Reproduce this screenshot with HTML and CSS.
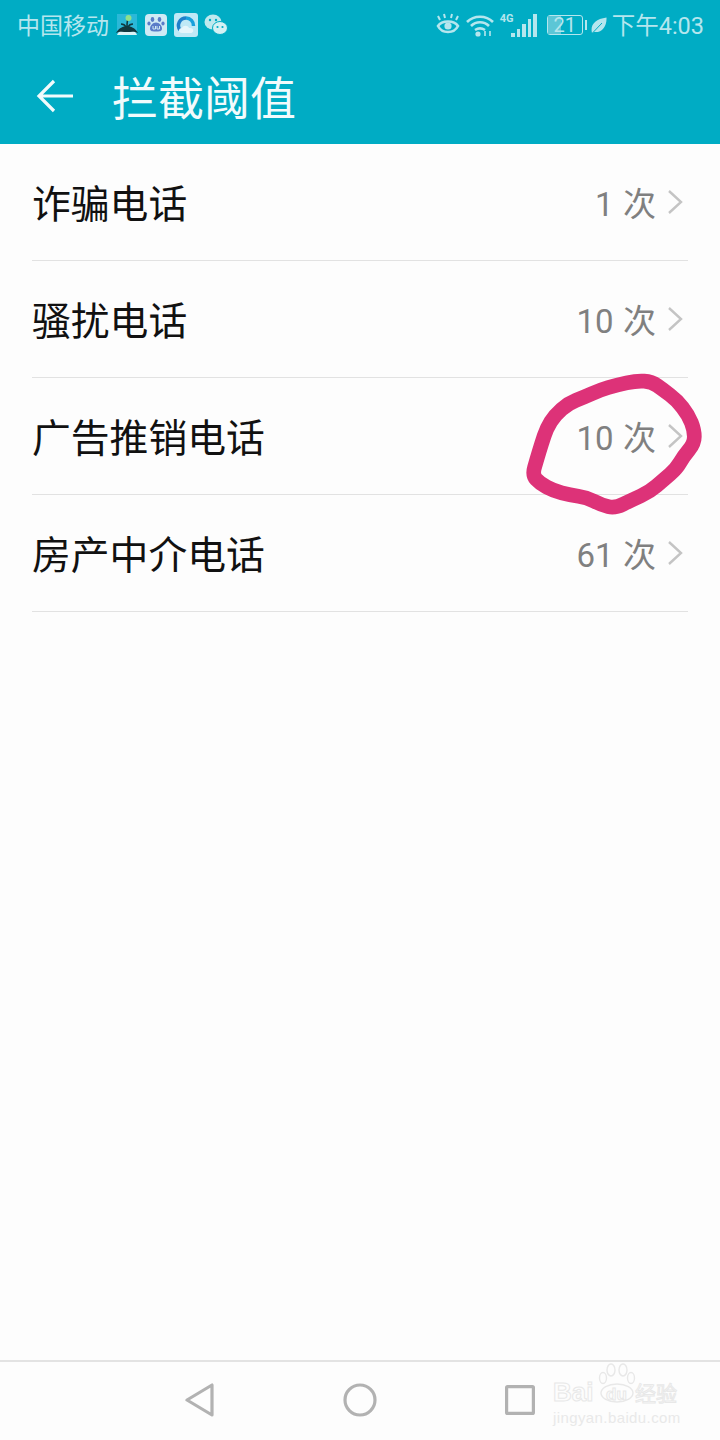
FILE: index.html
```html
<!DOCTYPE html>
<html lang="zh">
<head>
<meta charset="utf-8">
<title>拦截阈值</title>
<link rel="stylesheet" href="styles.css">
</head>
<body>
<div class="phone">
	<div class="appbar">
		<div class="status">
			<div class="status-left">
				<span class="carrier">中国移动</span>
				<svg class="ic-app" width="24" height="24" viewBox="0 0 24 24">
					<rect x="2" y="1" width="20" height="21" fill="#2bb8d8"/>
					<path d="M2 22h20l-3-5H5z" fill="#d9f3f6"/>
					<path d="M1 20c3-5 7-7 11-7s8 2 11 7c-4-2-7-1-11-1s-7-1-11 1z" fill="#10383f"/>
					<path d="M12 14c0-4 0-6 1-8M11 14c-1-2-3-3-5-3M13 14c1-2 3-3 5-3" stroke="#10383f" stroke-width="1.6" fill="none"/>
					<circle cx="13.5" cy="5" r="3" fill="#8fe08a"/>
				</svg>
				<svg class="ic-app app-b" width="24" height="24" viewBox="0 0 24 24">
					<rect x="1" y="1" width="22" height="22" rx="4" fill="#cfeaf5"/>
					<g fill="#5a7cc8">
						<ellipse cx="8.5" cy="6.5" rx="1.8" ry="2.4"/>
						<ellipse cx="15.5" cy="6.5" rx="1.8" ry="2.4"/>
						<ellipse cx="5" cy="10.5" rx="1.6" ry="2.1"/>
						<ellipse cx="19" cy="10.5" rx="1.6" ry="2.1"/>
						<path d="M12 9.5c-3 0-6 3-6 6 0 3 3 3 6 3s6 0 6-3c0-3-3-6-6-6z"/>
					</g>
					<path d="M9 13v3h2.500v-3M13 13v3h2.500v-3" stroke="#cfeaf5" stroke-width="1" fill="none"/>
				</svg>
				<svg class="ic-app" width="24" height="24" viewBox="0 0 24 24">
					<rect x="0" y="0" width="24" height="24" rx="3" fill="#bfe9f6"/>
					<path d="M6 17a7.5 7.5 0 0 1 6-12" stroke="#1f7fca" stroke-width="3.5" fill="none"/>
					<path d="M12 5a7.5 7.5 0 0 1 7.5 8" stroke="#19a0dc" stroke-width="3.5" fill="none"/>
					<path d="M8 20c-4 0-4-5 0-5 1-3 6-3 7 0 5-1 6 5 1 5z" fill="#e6f6fb"/>
				</svg>
				<svg class="ic-wechat" width="24" height="22" viewBox="0 0 24 22">
					<ellipse cx="9" cy="8" rx="8.5" ry="7.5" fill="#bfe9ee"/>
					<ellipse cx="16" cy="14" rx="7.5" ry="6.5" fill="#d4f1f4" stroke="#00acc4" stroke-width="1"/>
					<circle cx="6" cy="6" r="1.2" fill="#00acc4"/>
					<circle cx="12" cy="6" r="1.2" fill="#00acc4"/>
					<circle cx="13.5" cy="13" r="1.1" fill="#00acc4"/>
					<circle cx="18.5" cy="13" r="1.1" fill="#00acc4"/>
				</svg>
			</div>
			<div class="status-right">
				<svg class="ic-eye" width="26" height="22" viewBox="0 0 26 22" fill="none" stroke="#b5e6ee" stroke-width="2.6">
					<path d="M3 13c4-6 16-6 20 0-4 8-16 8-20 0z"/>
					<circle cx="13" cy="13" r="3.6" fill="#b5e6ee" stroke="none"/>
					<path d="M5 7L3 3M10 5l-1-4M16 5l1-4M21 7l2-4" stroke-width="2"/>
				</svg>
				<svg class="ic-wifi" width="28" height="23" viewBox="0 0 28 23" fill="none" stroke="#b5e6ee" stroke-width="2.6">
					<path d="M1 8c7-7 19-7 26 0M5 12c5-5 13-5 18 0M9 16c3-2 7-2 10 0"/>
					<circle cx="12" cy="20" r="2.6" fill="#b5e6ee" stroke="none"/>
					<path d="M19 17v5M24 17v5" stroke-width="1.6"/>
				</svg>
				<div class="signal">
					<span class="net">4G</span>
					<i class="b1"></i><i class="b2"></i><i class="b3"></i><i class="b4"></i><i class="b5"></i>
				</div>
				<div class="battery">
					<div class="batt-body"><div class="batt-fill" style="width:40%"></div><span class="batt-num">21</span></div>
					<div class="batt-tip"></div>
				</div>
				<svg class="ic-leaf" width="16" height="17" viewBox="0 0 16 17">
					<path d="M1 16C-1 8 4 2 15.5 0.5 16 9 11 16 3 15z" fill="#b5e6ee"/>
					<path d="M1.5 16L11 6" stroke="#00acc4" stroke-width="1"/>
				</svg>
				<span class="time">下午4:03</span>
			</div>
		</div>
		<div class="toolbar">
			<svg class="back" width="38" height="34" viewBox="0 0 38 34" fill="none" stroke="#f2fbfc" stroke-width="3.2">
				<path d="M37 17H3M18 2L3 17l15 15"/>
			</svg>
			<h1 class="title">拦截阈值</h1>
		</div>
	</div>

	<ul class="list">
		<li class="row"><span class="row-name">诈骗电话</span><span class="row-val"><b>1</b> 次</span><svg class="chev" width="16" height="26" viewBox="0 0 16 26"><path d="M2 2l12 11L2 24" fill="none" stroke="#c4c4c4" stroke-width="2.4"/></svg></li>
		<li class="row"><span class="row-name">骚扰电话</span><span class="row-val"><b>10</b> 次</span><svg class="chev" width="16" height="26" viewBox="0 0 16 26"><path d="M2 2l12 11L2 24" fill="none" stroke="#c4c4c4" stroke-width="2.4"/></svg></li>
		<li class="row"><span class="row-name">广告推销电话</span><span class="row-val"><b>10</b> 次</span><svg class="chev" width="16" height="26" viewBox="0 0 16 26"><path d="M2 2l12 11L2 24" fill="none" stroke="#c4c4c4" stroke-width="2.4"/></svg></li>
		<li class="row"><span class="row-name">房产中介电话</span><span class="row-val"><b>61</b> 次</span><svg class="chev" width="16" height="26" viewBox="0 0 16 26"><path d="M2 2l12 11L2 24" fill="none" stroke="#c4c4c4" stroke-width="2.4"/></svg></li>
	</ul>

	<div class="navbar">
		<svg width="30" height="34" viewBox="0 0 30 34" fill="none" stroke="#b2b2b2" stroke-width="3.2" stroke-linejoin="round"><path d="M27 2v30L2 17z"/></svg>
		<svg width="34" height="34" viewBox="0 0 34 34" fill="none" stroke="#b2b2b2" stroke-width="3.2"><circle cx="17" cy="17" r="15"/></svg>
		<svg width="30" height="30" viewBox="0 0 30 30" fill="none" stroke="#b2b2b2" stroke-width="3.2" stroke-linejoin="round"><rect x="1.6" y="1.6" width="26.8" height="26.8" rx="1"/></svg>
	</div>

	<!-- hand drawn mark on top of the screenshot -->
	<svg class="scribble" width="220" height="170" viewBox="0 0 660 510" fill="none">
		<path d="M103.5 322.500Q110 300 117.500 275Q125 250 132.500 227.500Q140 205 152.500 185Q165 165 185 147.500Q205 130 227.500 121Q250 112 275 101Q300 90 325 82.500Q350 75 380 68.500Q410 62 432.500 63.500Q455 65 472.500 77.500Q490 90 510 105Q530 120 547.500 142.500Q565 165 574 187.500Q583 210 583 230Q583 250 566.500 270Q550 290 540 307.500Q530 325 510 342.500Q490 360 470 377.500Q450 395 422.500 407.500Q395 420 370 432.500Q345 445 325 440Q305 435 282.500 423.500Q260 412 235 408.500Q210 405 185 398.500Q160 392 140 381Q120 370 108.500 357.500Q97 345 103.500 322.500Z" stroke="#dd3278" stroke-width="44" stroke-linejoin="round"/>
	</svg>

	<div class="watermark">
		<div class="wm-top">
			<span class="wm-bai">Bai</span>
			<span class="wm-du">
				<svg class="paw" width="38" height="42" viewBox="0 0 38 42" fill="none" stroke="#e8e8e8" stroke-width="1.4">
					<ellipse cx="13" cy="7" rx="4" ry="6"/>
					<ellipse cx="25" cy="7" rx="4" ry="6"/>
					<ellipse cx="5" cy="15" rx="3.5" ry="5.5"/>
					<ellipse cx="33" cy="15" rx="3.5" ry="5.5"/>
					<ellipse cx="19" cy="30" rx="16" ry="9"/>
				</svg>
				du
			</span>
			<span class="wm-cn">经验</span>
		</div>
		<div class="wm-url">jingyan.baidu.com</div>
	</div>
</div>
</body>
</html>
```

FILE: styles.css
```css
* {
	box-sizing: border-box;
}
body {
	margin: 0;
	background: #fdfdfd;
	font-family: "Noto Sans CJK SC", "Roboto", sans-serif;
}
.phone {
	position: relative;
	width: 720px;
	height: 1440px;
	overflow: hidden;
	display: flex;
	flex-direction: column;
}
.appbar {
	height: 144px;
	background: #00acc4;
	flex: none;
}
.status {
	height: 50px;
	padding: 0 16px 0 17px;
	display: flex;
	justify-content: space-between;
	align-items: center;
	color: #b5e6ee;
}
.status-left, .status-right {
	display: flex;
	align-items: center;
}
.carrier {
	font-size: 23px;
	margin: -2px 6px 0 0;
}
.ic-app {
	margin-right: 6px;
}
.app-b {
	margin-left: -1px;
}
.status-right svg {
	flex: none;
}
.ic-eye {
	margin-top: -3px;
}
.ic-wifi {
	margin-left: 5px;
}
.signal {
	position: relative;
	width: 37px;
	height: 23px;
	margin-left: 6px;
	display: flex;
	align-items: flex-end;
	justify-content: flex-end;
	gap: 2px;
}
.signal i {
	width: 3.5px;
	background: #b5e6ee;
}
.b1 { height: 4px; }
.b2 { height: 8px; }
.b3 { height: 13px; }
.b4 { height: 18px; }
.b5 { height: 23px; }
.net {
	position: absolute;
	left: 0;
	top: -2px;
	font: bold 11px "Roboto", sans-serif;
}
.battery {
	display: flex;
	align-items: center;
	margin-left: 10px;
}
.batt-body {
	position: relative;
	width: 36px;
	height: 20px;
	border: 1.5px solid #b5e6ee;
	border-radius: 3px;
}
.batt-fill {
	height: 100%;
	background: #5cc6d6;
}
.batt-num {
	position: absolute;
	left: 0;
	right: 0;
	top: -1.5px;
	text-align: center;
	font: 20px/20px "Roboto", sans-serif;
}
.batt-tip {
	width: 2px;
	height: 10px;
	margin-left: 2px;
	background: #b5e6ee;
}
.ic-leaf {
	margin-left: 4px;
}
.time {
	font-size: 23.5px;
	margin: -2px 0 0 5px;
	font-family: "Roboto", "Noto Sans CJK SC", sans-serif;
}
.toolbar {
	height: 94px;
	display: flex;
	align-items: center;
	padding-left: 36px;
}
.back {
	margin-top: -2px;
}
.title {
	margin: -4px 0 0 38px;
	font-size: 46px;
	font-weight: 400;
	color: #f2fbfc;
}
.list {
	list-style: none;
	margin: 0 32px;
	padding: 0;
	flex: 1;
}
.row {
	height: 117px;
	border-bottom: 1px solid #e2e2e2;
	display: flex;
	align-items: center;
}
.row-name {
	flex: 1;
	font-size: 38.8px;
	margin-top: -2px;
	color: #111;
}
.row-val {
	font-size: 33px;
	color: #808080;
}
.row-val b {
	font-family: "Roboto", sans-serif;
	font-weight: 400;
	margin-right: 2px;
}
.chev {
	margin: 0 5px 0 11px;
}
.navbar {
	flex: none;
	height: 80px;
	border-top: 2px solid #e3e3e3;
	padding: 0 0 2px 185px;
	display: flex;
	align-items: center;
	gap: 128px;
}
.scribble {
	position: absolute;
	left: 500px;
	top: 360px;
}
.watermark {
	position: absolute;
	left: 553px;
	top: 1363px;
	width: 130px;
	color: #fdfdfd;
	-webkit-text-stroke: 1px #e8e8e8;
}
.wm-top {
	display: flex;
	align-items: flex-end;
	height: 42px;
	white-space: nowrap;
}
.wm-bai {
	width: 45px;
	font: bold 26px/26px "Liberation Sans", sans-serif;
}
.wm-du {
	position: relative;
	width: 37px;
	text-align: center;
	font: bold 17px/20px "Liberation Sans", sans-serif;
}
.paw {
	position: absolute;
	left: 0;
	bottom: 0;
}
.wm-cn {
	font: 400 21px/25px "Noto Sans CJK SC", sans-serif;
}
.wm-url {
	margin-top: 4px;
	color: #e9e9e9;
	-webkit-text-stroke: 0;
	font: 15px/18px "Liberation Sans", sans-serif;
	letter-spacing: 0.4px;
}
```
